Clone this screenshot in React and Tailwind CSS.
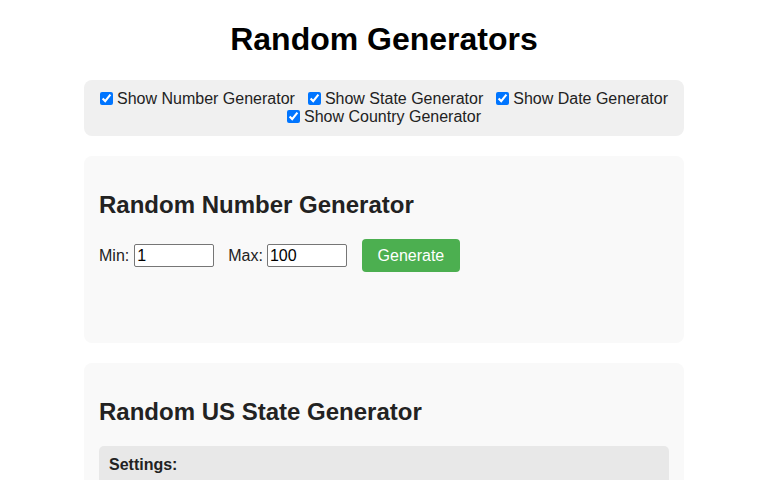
import React, { useState } from "react";

const toggles = [
  { key: "number", label: "Show Number Generator" },
  { key: "state", label: "Show State Generator" },
  { key: "date", label: "Show Date Generator" },
  { key: "country", label: "Show Country Generator" },
];

export default function App() {
  const [show, setShow] = useState({ number: true, state: true, date: true, country: true });
  const [min, setMin] = useState("1");
  const [max, setMax] = useState("100");
  const [result, setResult] = useState(null);

  const generate = () => {
    const lo = parseInt(min, 10);
    const hi = parseInt(max, 10);
    if (isNaN(lo) || isNaN(hi) || lo > hi) return;
    setResult(Math.floor(Math.random() * (hi - lo + 1)) + lo);
  };

  return (
    <div className="min-h-screen bg-white text-black font-['Liberation_Sans',Arial,sans-serif] text-[16px]">
      <div className="max-w-[600px] mx-auto">
        <h1 className="text-[32px] leading-[37px] font-bold text-center pt-[21px] pb-[22px]">
          Random Generators
        </h1>

        <div className="bg-[#f0f0f0] rounded-[8px] py-[10px] px-[6px] flex flex-wrap justify-center gap-x-[13px]">
          {toggles.map((t) => (
            <label key={t.key} className="block leading-[18px] text-[#222]">
              <input
                type="checkbox"
                checked={show[t.key]}
                onChange={() => setShow({ ...show, [t.key]: !show[t.key] })}
                className="w-[13px] h-[13px] mr-[4px] align-[-1px]"
              />
              {t.label}
            </label>
          ))}
        </div>

        {show.number && (
          <div className="bg-[#f9f9f9] rounded-[8px] p-[15px] mt-[20px]">
            <h2 className="text-[24px] leading-[28px] font-bold my-[20px] text-[#222]">
              Random Number Generator
            </h2>
            <div className="flex items-center h-[33px] text-[#222]">
              <span>Min:</span>
              <input
                value={min}
                onChange={(e) => setMin(e.target.value)}
                className="ml-[5px] w-[80px] h-[23px] border border-[#767676] rounded-[2px] px-[2px] bg-white text-black"
              />
              <span className="ml-[14px]">Max:</span>
              <input
                value={max}
                onChange={(e) => setMax(e.target.value)}
                className="ml-[4px] w-[80px] h-[23px] border border-[#767676] rounded-[2px] px-[2px] bg-white text-black"
              />
              <button
                onClick={generate}
                className="ml-[15px] h-[33px] w-[98px] bg-[#4caf50] text-white rounded-[4px] text-center"
              >
                Generate
              </button>
            </div>
            <div className="h-[56px] pt-[20px] text-[20px] font-bold text-[#222]">
              {result !== null ? `Result: ${result}` : ""}
            </div>
          </div>
        )}

        {show.state && (
          <div className="bg-[#f9f9f9] rounded-[8px] p-[15px] mt-[20px]">
            <h2 className="text-[24px] leading-[28px] font-bold my-[20px] text-[#222]">
              Random US State Generator
            </h2>
            <div className="bg-[#e8e8e8] rounded-[5px] p-[10px] leading-[18px]">
              <div className="font-bold text-[#222]">Settings:</div>
              <div className="h-[60px]" />
            </div>
          </div>
        )}
      </div>
    </div>
  );
}
